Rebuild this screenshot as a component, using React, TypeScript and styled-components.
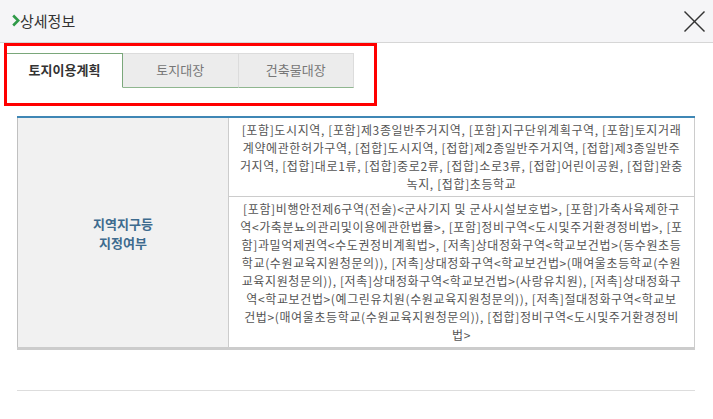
import React from 'react';
import styled, { createGlobalStyle } from 'styled-components';

const GlobalStyle = createGlobalStyle`
    html, body {
        margin: 0;
        padding: 0;
        background: #fff;
    }
    body {
        font-family: "Noto Sans CJK KR", "Noto Sans", sans-serif;
        color: #333;
    }
`;

const Page = styled.div`
    width: 713px;
    height: 419px;
    overflow: hidden;
    background: #fff;
`;

const Header = styled.div`
    display: flex;
    align-items: center;
    justify-content: space-between;
    height: 42px;
    padding: 0 8px 0 12px;
    background: #f5f5f7;
    border-bottom: 1px solid #d6d6d6;
`;

const Title = styled.div`
    display: flex;
    align-items: center;
    font-size: 15px;
    color: #333;
    padding-bottom: 2px;
`;

const CloseButton = styled.button`
    display: flex;
    padding: 0;
    border: 0;
    background: none;
    cursor: pointer;
`;

const TabBox = styled.div`
    box-sizing: border-box;
    width: 373px;
    height: 63px;
    margin-left: 4px;
    padding-top: 7px;
    border: 3px solid #ff0000;
`;

const TabList = styled.div`
    display: flex;
    width: 347px;
`;

const Tab = styled.div<{ $active?: boolean }>`
    box-sizing: border-box;
    display: flex;
    align-items: center;
    justify-content: center;
    width: ${p => (p.$active ? '116px' : '115.5px')};
    height: 35px;
    font-size: 13px;
    font-weight: ${p => (p.$active ? 700 : 400)};
    color: ${p => (p.$active ? '#333' : '#777')};
    background: ${p => (p.$active ? '#fff' : '#ececec')};
    border-top: 1px solid ${p => (p.$active ? '#7aa77a' : '#dcdcdc')};
    border-right: 1px solid ${p => (p.$active ? '#7aa77a' : '#dcdcdc')};
    border-bottom: 1px solid ${p => (p.$active ? 'transparent' : '#8fb68f')};
    padding-bottom: 2px;
`;

const InfoTable = styled.table`
    width: 678px;
    margin: 10px 0 0 17px;
    border-collapse: collapse;
    border-top: 2px solid #3f87b5;
    border-bottom: 3px solid #cccccc;
    border-left: 1px solid #c0c0c0;
    border-right: 1px solid #cccccc;
`;

const LabelCell = styled.th`
    width: 210px;
    padding: 0;
    background: #f1f1f1;
    border-right: 1px solid #cccccc;
    font-size: 13px;
    font-weight: 700;
    color: #3d6b8e;
    text-align: center;
    vertical-align: middle;
`;

const LabelLine = styled.div`
    line-height: 19px;
`;

const ValueCell = styled.td`
    padding: 3px 6px;
    border-bottom: 1px solid #cccccc;
    font-size: 12px;
    line-height: 18px;
    letter-spacing: 0.62px;
    color: #555;
    text-align: center;
    white-space: nowrap;
`;

const Line = styled.div`
    height: 18px;
`;

const Divider = styled.div`
    width: 678px;
    margin: 40px 0 0 17px;
    border-top: 1px solid #dddddd;
`;

const rows: string[][] = [
    [
        '[포함]도시지역, [포함]제3종일반주거지역, [포함]지구단위계획구역, [포함]토지거래',
        '계약에관한허가구역, [접합]도시지역, [접합]제2종일반주거지역, [접합]제3종일반주',
        '거지역, [접합]대로1류, [접합]중로2류, [접합]소로3류, [접합]어린이공원, [접합]완충',
        '녹지, [접합]초등학교',
    ],
    [
        '[포함]비행안전제6구역(전술)<군사기지 및 군사시설보호법>, [포함]가축사육제한구',
        '역<가축분뇨의관리및이용에관한법률>, [포함]정비구역<도시및주거환경정비법>, [포',
        '함]과밀억제권역<수도권정비계획법>, [저촉]상대정화구역<학교보건법>(동수원초등',
        '학교(수원교육지원청문의)), [저촉]상대정화구역<학교보건법>(매여울초등학교(수원',
        '교육지원청문의)), [저촉]상대정화구역<학교보건법>(사랑유치원), [저촉]상대정화구',
        '역<학교보건법>(예그린유치원(수원교육지원청문의)), [저촉]절대정화구역<학교보',
        '건법>(매여울초등학교(수원교육지원청문의)), [접합]정비구역<도시및주거환경정비',
        '법>',
    ],
];

const tabs = ['토지이용계획', '토지대장', '건축물대장'];

const App = () => {
    return (
        <Page>
            <GlobalStyle />
            <Header>
                <Title>
                    <svg width="8" height="13" viewBox="0 0 8 13">
                        <polyline points="1.2,1.5 6.2,6.5 1.2,11.5" fill="none" stroke="#2f9a48" strokeWidth="2.6" />
                    </svg>
                    상세정보
                </Title>
                <CloseButton aria-label="닫기">
                    <svg width="21" height="21" viewBox="0 0 21 21">
                        <line x1="0.5" y1="0.5" x2="20.5" y2="20.5" stroke="#333" strokeWidth="1.4" />
                        <line x1="20.5" y1="0.5" x2="0.5" y2="20.5" stroke="#333" strokeWidth="1.4" />
                    </svg>
                </CloseButton>
            </Header>
            <TabBox>
                <TabList>
                    {tabs.map((t, i) => (
                        <Tab key={t} $active={i === 0}>
                            {t}
                        </Tab>
                    ))}
                </TabList>
            </TabBox>
            <InfoTable>
                <tbody>
                    {rows.map((lines, i) => (
                        <tr key={i}>
                            {i === 0 && (
                                <LabelCell rowSpan={2}>
                                    <LabelLine>지역지구등</LabelLine>
                                    <LabelLine>지정여부</LabelLine>
                                </LabelCell>
                            )}
                            <ValueCell>
                                {lines.map((l, j) => (
                                    <Line key={j}>{l}</Line>
                                ))}
                            </ValueCell>
                        </tr>
                    ))}
                </tbody>
            </InfoTable>
            <Divider />
        </Page>
    );
};

export default App;
